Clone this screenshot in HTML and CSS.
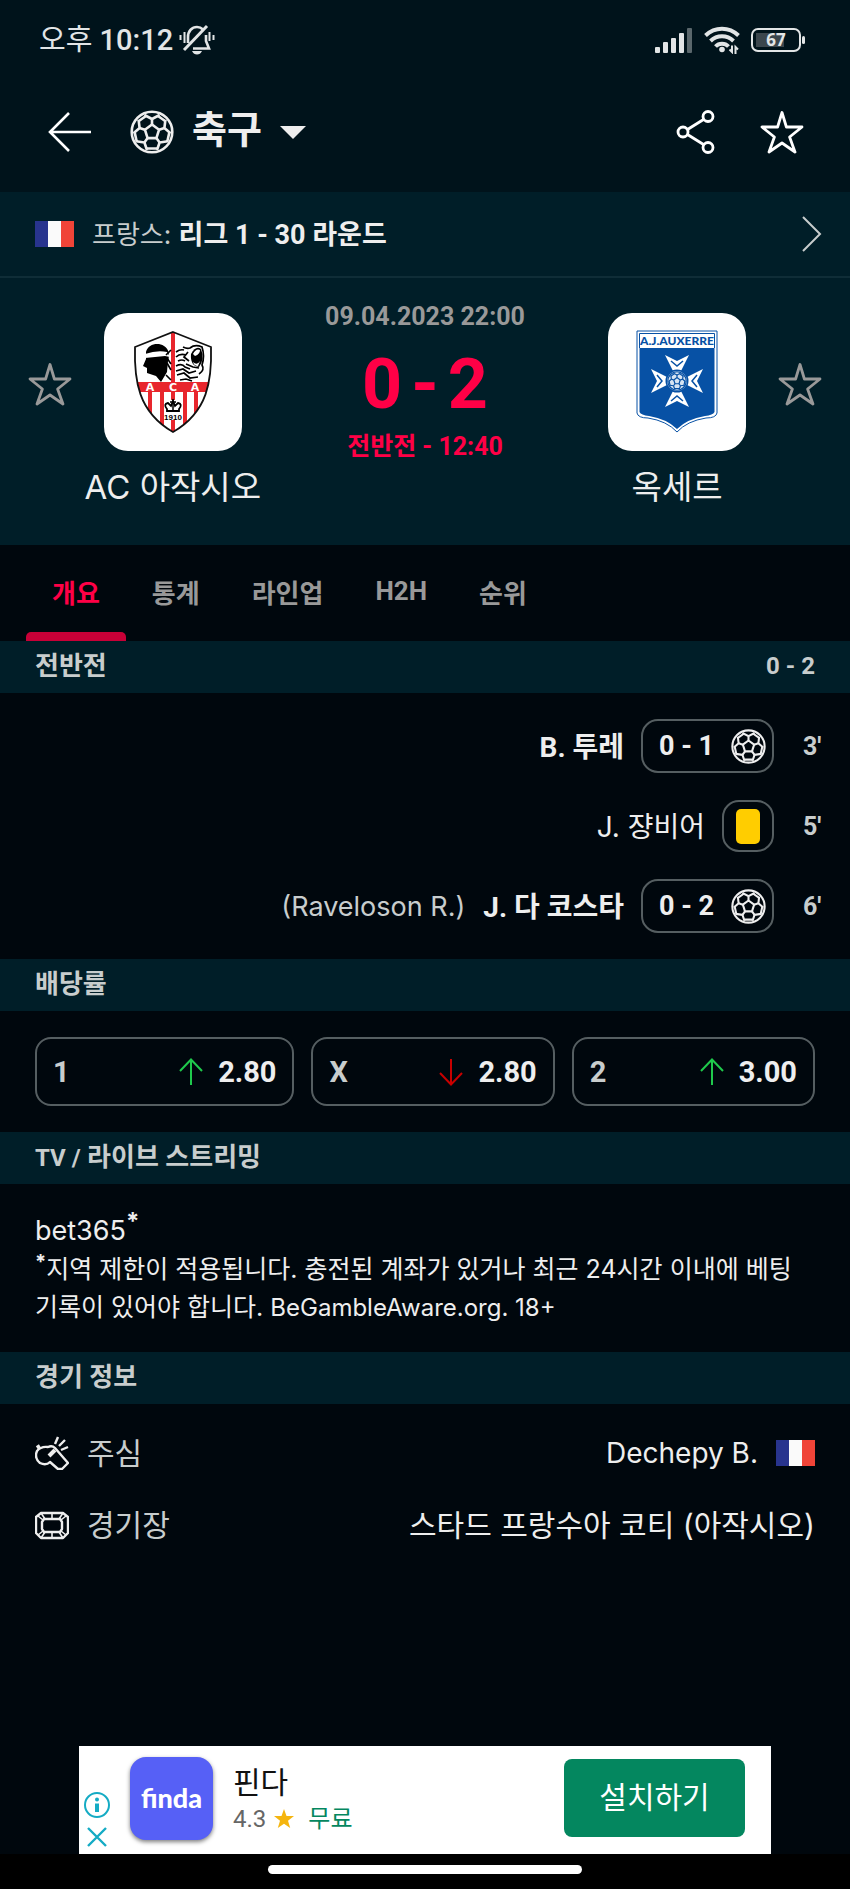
FILE: index.html
```html
<!DOCTYPE html>
<html lang="ko">
<head>
  <meta charset="UTF-8" />
  <meta name="viewport" content="width=device-width, initial-scale=1.0"/>
  <title>AC 아작시오 - 옥세르</title>
  <link rel="stylesheet" href="styles.css">
</head>
<body>
  <!-- shared icons -->
  <svg class="sprite" aria-hidden="true">
    <symbol id="icon-ball" viewBox="0 0 44 44">
      <g fill="none" stroke="currentColor" stroke-width="2.6" stroke-linejoin="round">
        <circle cx="22" cy="22" r="20.3"/>
        <path d="M22 14.5L29.1 19.7L26.4 28.1H17.6L14.9 19.7Z"/>
        <path d="M22 14.5V9M29.1 19.7L34.4 18M26.4 28.1L29.6 32.5M17.6 28.1L14.4 32.5M14.9 19.7L9.6 18"/>
        <path d="M14.4 5L22 9L29.6 5M35.4 9.8L34.4 18L40.5 23.2M37.8 31.3L29.6 32.5L27 40M17 40L14.4 32.5L6.2 31.3M3.5 23.2L9.6 18L8.6 9.8"/>
        <path d="M28 6L35.8 11.5M39.3 22.5L37.2 32M27 38.5H17M6.8 32L4.7 22.5M8.2 11.5L16 6"/>
      </g>
    </symbol>
    <symbol id="icon-star" viewBox="0 0 44 44">
      <path d="M22 2.5L26.4 17H42L29.6 27L35 42L22 33L9 42L14.4 27L2 17H17.6Z" fill="none" stroke="currentColor" stroke-width="2.8" stroke-linejoin="round"/>
    </symbol>
    <symbol id="icon-up" viewBox="0 0 24 28">
      <path d="M12 27V1.5M1 13L12 1.5L23 13" fill="none" stroke="currentColor" stroke-width="2"/>
    </symbol>
    <symbol id="icon-france" viewBox="0 0 39 26">
      <path fill="#28348e" d="M0 0h13v26H0z"/>
      <path fill="#fafafa" d="M13 0h13v26H13z"/>
      <path fill="#f04438" d="M26 0h13v26H26z"/>
    </symbol>
  </svg>

  <header class="header">
    <div class="status-bar">
      <span class="clock"><span class="ampm">오후</span> 10:12</span>
      <svg class="mute" viewBox="0 0 36 32" fill="none" stroke="currentColor" stroke-width="2.6">
        <path d="M9 19V13C9 7 13 3 18 3C20.5 3 22.5 4 24 5.5"/>
        <path d="M27 11V17L30 24.5H14"/>
        <path d="M5 26L28 2" stroke-width="3"/>
        <path d="M13 27H23C22 29.5 20 30.5 18 30.5S14 29.5 13 27Z" fill="currentColor" stroke="none"/>
        <path d="M1.5 11V16M5.5 8V19M30.5 8V17M34.5 11V16" stroke-width="2"/>
      </svg>
      <div class="indicators">
        <svg class="signal" viewBox="0 0 38 25" fill="currentColor">
          <rect x="0" y="19" width="5" height="6" rx="1"/>
          <rect x="8" y="14" width="5" height="11" rx="1"/>
          <rect x="16" y="10" width="5" height="15" rx="1"/>
          <rect x="24" y="5" width="5" height="20" rx="1"/>
          <rect x="32" y="0" width="5" height="25" rx="1" opacity=".4"/>
        </svg>
        <svg class="wifi" viewBox="0 0 36 28" fill="none" stroke="currentColor" stroke-width="4">
          <path d="M1.5 9.5C11 .5 25 .5 34.5 9.5M6.5 15C13 8.8 23 8.8 29.5 15M11.5 20.5C15 16.8 21 16.8 24.5 20.5"/>
          <circle cx="18" cy="23.5" r="2.8" fill="currentColor" stroke="none"/>
          <path d="M28 19.5V26L25.5 23.5M31.5 28V21L34 23.5" stroke-width="2"/>
        </svg>
        <span class="battery"><span class="battery-body">67</span></span>
      </div>
    </div>

    <nav class="toolbar">
      <button type="button" class="icon-btn" aria-label="뒤로">
        <svg class="icon-44" viewBox="0 0 44 44" fill="none" stroke="currentColor" stroke-width="2.6">
          <path d="M43 22H2M21 3L2 22L21 41"/>
        </svg>
      </button>
      <button type="button" class="sport">
        <svg class="icon-44"><use href="#icon-ball"/></svg>
        <span>축구</span>
        <svg class="caret" viewBox="0 0 26 13"><path d="M0 0H26L13 13Z" fill="currentColor"/></svg>
      </button>
      <button type="button" class="icon-btn share" aria-label="공유">
        <svg class="icon-44" viewBox="0 0 44 44" fill="none" stroke="currentColor" stroke-width="2.8">
          <circle cx="9" cy="22" r="5"/><circle cx="34" cy="6.5" r="5"/><circle cx="34" cy="37.5" r="5"/>
          <path d="M13.5 19.5L29.5 9.5M13.5 24.5L29.5 34.5"/>
        </svg>
      </button>
      <button type="button" class="icon-btn" aria-label="즐겨찾기">
        <svg class="icon-44"><use href="#icon-star"/></svg>
      </button>
    </nav>
  </header>

  <main>
    <a class="league" href="#league">
      <svg class="flag"><use href="#icon-france"/></svg>
      <span class="league-name">프랑스: <b>리그 1 - 30 라운드</b></span>
      <svg class="chevron" viewBox="0 0 20 36"><path d="M1 1L18 18L1 35" fill="none" stroke="currentColor" stroke-width="2"/></svg>
    </a>

    <section class="match">
      <button type="button" class="fav" aria-label="AC 아작시오 즐겨찾기"><svg class="icon-44"><use href="#icon-star"/></svg></button>
      <div class="team">
        <div class="crest">
          <svg width="80" height="104" viewBox="0 0 80 104">
            <defs>
              <clipPath id="shield-aca"><path d="M40 2L78 17C79 50 75 82 40 102C5 82 1 50 2 17Z"/></clipPath>
            </defs>
            <g clip-path="url(#shield-aca)">
              <path fill="#fff" d="M0 0H80V104H0z"/>
              <path fill="#e8262d" d="M0 52H80V62H0zM15 62h4v42h-4zM27 62h4v42h-4zM50 62h4v42h-4zM61 62h4v42h-4zM38 0h4v70h-4zM38 90h4v14h-4z"/>
              <path d="M13 22C15 14 25 12 31 16C36 19 37 25 35 31L34 42L28 52L23 46L14 43V38L10 36L13 29Z"/>
              <path d="M12 24Q24 20 34 22L37 27L32 26L12 28Z" fill="#fff"/>
              <path d="M33 25L38 20M34 28L38 34M34 33L38 40M33 45L38 50" fill="none" stroke="#000" stroke-width="1.6"/>
              <path d="M43 22Q47 19 51 20M50 17Q54 19 57 18Q62 14 69 17Q72 26 69 35Q72 40 66 44M43 27Q47 23 53 25M45 31Q49 29 52 31M43 36Q49 33 52 37L57 39M43 41L50 39L56 43L63 41M44 45L51 43L57 48L65 47M47 50L53 49L59 51M55 22L51 27L56 31M53 34L60 37L66 38" fill="none" stroke="#000" stroke-width="1.7"/>
              <path d="M58 24Q63 15 68 19Q72 29 66 37Q57 36 58 24Z"/>
              <path d="M60 24Q63 18 67 20Q67 24 62 26ZM60 32Q64 36 67 31L65 36Q61 36 60 32Z" fill="#fff"/>
              <path d="M34 81H46V79Q50 74 45 73L42 76L40 71L38 76L35 73Q30 74 34 79Z" fill="none" stroke="#000" stroke-width="1.8"/>
              <path d="M40 69V80M37 72H43" stroke="#000" stroke-width="1.5"/>
              <text x="17" y="61" class="aca">A</text><text x="40" y="61" class="aca">C</text><text x="62" y="61" class="aca">A</text>
              <text x="40" y="90" class="aca-year">1910</text>
            </g>
            <path d="M40 2L78 17C79 50 75 82 40 102C5 82 1 50 2 17Z" fill="none" stroke="#111" stroke-width="1.8"/>
          </svg>
        </div>
        <span class="team-name">AC 아작시오</span>
      </div>
      <div class="score">
        <time class="date">09.04.2023 22:00</time>
        <div class="result"><span>0</span><span>-</span><span>2</span></div>
        <div class="stage">전반전 - 12:40</div>
      </div>
      <div class="team">
        <div class="crest">
          <svg width="82" height="104" viewBox="0 0 82 104">
            <path d="M1 1H81V83Q80 88 70 88Q51 91 41 102Q31 91 12 88Q2 88 1 83Z" fill="#fff" stroke="#0751a5"/>
            <path d="M3.5 18H78.5V82Q77 85 69 86Q51 89 41 99Q31 89 13 86Q5 85 3.5 82Z" fill="#0751a5"/>
            <path d="M3.5 18V3.5H78.5V18" fill="none" stroke="#0751a5"/>
            <text x="41" y="15" class="aja">A.J.AUXERRE</text>
            <g fill="#fff">
              <path id="cross-arm" d="M37 41L29 25L41 31L53 25L45 41Z"/>
              <use href="#cross-arm" transform="rotate(90 41 51)"/>
              <use href="#cross-arm" transform="rotate(180 41 51)"/>
              <use href="#cross-arm" transform="rotate(270 41 51)"/>
            </g>
            <path d="M35 31L41 36L47 31M35 71L41 66L47 71M21 45L26 51L21 57M61 45L56 51L61 57" fill="none" stroke="#0751a5" stroke-width="1.5"/>
            <circle cx="41" cy="51" r="11.5" fill="#0751a5"/>
            <circle cx="41" cy="51" r="10" fill="#d7e4f2"/>
            <svg x="31" y="41" width="20" height="20" color="#0751a5"><use href="#icon-ball"/></svg>
          </svg>
        </div>
        <span class="team-name">옥세르</span>
      </div>
      <button type="button" class="fav" aria-label="옥세르 즐겨찾기"><svg class="icon-44"><use href="#icon-star"/></svg></button>
    </section>

    <div class="tabs" role="tablist">
      <button type="button" class="tab active" role="tab" aria-selected="true">개요</button>
      <button type="button" class="tab" role="tab">통계</button>
      <button type="button" class="tab" role="tab">라인업</button>
      <button type="button" class="tab" role="tab">H2H</button>
      <button type="button" class="tab" role="tab">순위</button>
    </div>

    <h2 class="section-title"><span>전반전</span><span class="small">0 - 2</span></h2>
    <ul class="events">
      <li class="event">
        <b class="player">B. 투레</b>
        <span class="badge"><span>0 - 1</span><svg class="ball"><use href="#icon-ball"/></svg></span>
        <span class="minute">3'</span>
      </li>
      <li class="event">
        <span class="player">J. 쟝비어</span>
        <span class="badge card-badge"><span class="yellow-card"></span></span>
        <span class="minute">5'</span>
      </li>
      <li class="event">
        <span class="assist">(Raveloson R.)</span>
        <b class="player">J. 다 코스타</b>
        <span class="badge"><span>0 - 2</span><svg class="ball"><use href="#icon-ball"/></svg></span>
        <span class="minute">6'</span>
      </li>
    </ul>

    <h2 class="section-title">배당률</h2>
    <div class="odds">
      <button type="button" class="odd"><span class="odd-type">1</span><svg class="arrow up"><use href="#icon-up"/></svg><span>2.80</span></button>
      <button type="button" class="odd"><span class="odd-type">X</span><svg class="arrow down"><use href="#icon-up"/></svg><span>2.80</span></button>
      <button type="button" class="odd"><span class="odd-type">2</span><svg class="arrow up"><use href="#icon-up"/></svg><span>3.00</span></button>
    </div>

    <h2 class="section-title"><span><span class="small">TV /</span> 라이브 스트리밍</span></h2>
    <div class="streaming">
      <a class="bookmaker" href="#bet365">bet365<sup>*</sup></a>
      <p><sup>*</sup>지역 제한이 적용됩니다. 충전된 계좌가 있거나 최근 24시간 이내에 베팅 기록이 있어야 합니다. <span class="small">BeGambleAware.org. 18+</span></p>
    </div>

    <h2 class="section-title">경기 정보</h2>
    <dl class="info">
      <div class="info-row">
        <svg class="info-icon" viewBox="0 0 34 34" fill="none" stroke="currentColor" stroke-width="2.4" stroke-linejoin="round">
          <path d="M13 11Q17 9 20 12L33 27L27 33H23L15 26Q11 30 5 27Q-1 22 2 15Q6 10 13 11Z"/>
          <path d="M14 20L20 14" stroke-width="4"/>
          <path d="M2 12L5 10" stroke-width="4"/>
          <path d="M20 8L23 1M24 10L30 4M26 14L33 11"/>
        </svg>
        <dt>주심</dt>
        <dd><span class="referee">Dechepy B.</span><svg class="flag"><use href="#icon-france"/></svg></dd>
      </div>
      <div class="info-row">
        <svg class="info-icon" viewBox="0 0 34 34" fill="none" stroke="currentColor" stroke-width="2.4" stroke-linejoin="round">
          <path d="M6 5H28L33 9V25L28 30H6L1 25V9Z"/>
          <path d="M9 11H25L27 14V21L25 24H9L7 21V14Z"/>
          <path d="M17 5V11M17 24V30M3 8L8 12M31 8L26 12M3 27L8 23M31 27L26 23M6 5L10 11M28 5L24 11M6 30L10 24M28 30L24 24" stroke-width="1.6"/>
        </svg>
        <dt>경기장</dt>
        <dd><span class="venue">스타드 프랑수아 코티 (아작시오)</span></dd>
      </div>
    </dl>
  </main>

  <aside class="ad">
    <div class="ad-controls">
      <button type="button" aria-label="광고 정보">
        <svg width="26" height="26" viewBox="0 0 26 26"><circle cx="13" cy="13" r="12" fill="none" stroke="currentColor" stroke-width="2"/><circle cx="13" cy="7.5" r="2" fill="currentColor"/><path d="M11 11.5H15V20H11Z" fill="currentColor"/></svg>
      </button>
      <button type="button" aria-label="광고 닫기">
        <svg width="20" height="20" viewBox="0 0 20 20"><path d="M1 1L19 19M19 1L1 19" stroke="currentColor" stroke-width="2.4"/></svg>
      </button>
    </div>
    <div class="ad-logo">finda</div>
    <div class="ad-text">
      <div class="ad-title">핀다</div>
      <div class="ad-meta">4.3
        <svg width="20" height="20" viewBox="0 0 20 20"><path d="M10 0L12.5 7H20L14 11.7L16.2 19L10 14.7L3.8 19L6 11.7L0 7H7.5Z" fill="#f5b50f"/></svg>
        <span class="free">무료</span>
      </div>
    </div>
    <button type="button" class="install">설치하기</button>
  </aside>
  <div class="nav-bar"><div class="nav-handle"></div></div>
</body>
</html>
```

FILE: styles.css
```css
* { box-sizing: border-box; }
body {
  margin: 0;
  min-height: 100vh;
  display: flex;
  flex-direction: column;
  background: #00070d;
  color: #eee;
  font-family: Inter, "Noto Sans CJK KR", sans-serif;
}
svg { display: block; flex: none; }
button {
  margin: 0;
  padding: 0;
  border: 0;
  background: none;
  color: inherit;
  font: inherit;
  cursor: pointer;
}
a { color: inherit; text-decoration: none; }
b, .date, .stage, .tab, .section-title, .badge, .minute, .odd {
  font-family: Roboto, "Noto Sans CJK KR", sans-serif;
  font-weight: bold;
}
.sprite { position: absolute; width: 0; height: 0; }
.flag { width: 39px; height: 26px; }
.icon-44 { width: 44px; height: 44px; }
.small { font-size: 24px; }

/* header */
.header { background: #00131b; }
.status-bar {
  display: flex;
  align-items: center;
  padding: 16px 45px 8px 39px;
  line-height: 48px;
  color: #e2e5e6;
}
.clock {
  font-family: Roboto, "Noto Sans CJK KR", sans-serif;
  font-size: 29px;
  font-weight: 500;
}
.ampm { font-weight: normal; }
.mute { width: 36px; height: 32px; margin-left: 6px; }
.indicators { display: flex; align-items: center; gap: 11px; margin-left: auto; }
.signal { width: 38px; height: 25px; }
.wifi { width: 36px; height: 28px; }
.battery { display: flex; align-items: center; gap: 1px; }
.battery::after { content: ""; width: 3px; height: 8px; border-radius: 2px; background: #e2e5e6; }
.battery-body {
  width: 50px;
  height: 24px;
  border: 2px solid #e2e5e6;
  border-radius: 7px;
  background: linear-gradient(#3b464d, #3b464d) 3px 3px / 28px 14px no-repeat;
  font-family: "Noto Sans", sans-serif;
  font-size: 17px;
  font-weight: bold;
  line-height: 20px;
  text-align: center;
}
.toolbar { display: flex; align-items: center; padding: 38px 46px 38px 48px; color: #fff; }
.sport {
  display: flex;
  align-items: center;
  margin-left: 38px;
  color: #eee;
  font-size: 38px;
  font-weight: bold;
  line-height: 38px;
}
.sport span { margin: 0 18px 6px; }
.caret { width: 26px; height: 13px; }
.share { margin-left: auto; margin-right: 42px; }

/* league */
.league {
  display: flex;
  align-items: center;
  min-height: 86px;
  padding: 0 28px 0 35px;
  border-bottom: 2px solid #0f2d37;
  background: #001e28;
  font-size: 26px;
}
.league-name { flex: 1; margin-left: 18px; padding-bottom: 4px; color: #c8cdcd; }
.league-name b { color: #eee; font-size: 27px; }
.chevron { width: 20px; height: 36px; color: #c8cdcd; }

/* match */
.match {
  display: grid;
  grid-template-columns: 44px 2fr 3fr 2fr 44px;
  align-items: start;
  padding: 24px 28px 35px;
  background: #001e28;
}
.fav { margin-top: 60px; color: #999; }
.team { display: flex; flex-direction: column; align-items: center; padding-top: 11px; }
.crest {
  display: flex;
  align-items: center;
  justify-content: center;
  width: 138px;
  height: 138px;
  border-radius: 24px;
  background: #fff;
}
.team-name { margin-top: 14px; padding-bottom: 1px; font-size: 33px; line-height: 44px; white-space: nowrap; }
.aca { font: bold 11px "DejaVu Sans", sans-serif; fill: #fff; text-anchor: middle; }
.aca-year { font: bold 8px "Liberation Sans", sans-serif; text-anchor: middle; }
.aja { font: 900 12px Lato, sans-serif; fill: #0751a5; text-anchor: middle; }
.score { text-align: center; color: #ff0046; font-size: 25px; line-height: 30px; }
.date { display: block; color: #999; }
.result {
  display: flex;
  justify-content: center;
  gap: 9px;
  margin: 22px 0 18px;
  font-family: Roboto, sans-serif;
  font-size: 70px;
  font-weight: bold;
  line-height: 60px;
}

/* tabs */
.tabs { display: flex; padding-left: 26px; }
.tab {
  position: relative;
  height: 96px;
  padding: 0 26px 4px;
  color: #999;
  font-size: 26px;
}
.tab.active { color: #ff0046; }
.tab.active::after {
  content: "";
  position: absolute;
  right: 0;
  bottom: 0;
  left: 0;
  height: 9px;
  border-radius: 5px 5px 0 0;
  background: #c80037;
}
.section-title {
  display: flex;
  justify-content: space-between;
  height: 52px;
  margin: 0;
  padding: 0 35px;
  background: #001e28;
  color: #c8cdcd;
  font-size: 26px;
  line-height: 50px;
}

/* events */
.events {
  display: flex;
  flex-direction: column;
  gap: 26px;
  margin: 0;
  padding: 26px 27px;
  list-style: none;
}
.event { display: flex; align-items: center; justify-content: flex-end; height: 54px; font-size: 28px; }
.player { padding-bottom: 2px; }
.assist { margin-right: 18px; color: #c8cdcd; font-size: 27px; }
.badge {
  display: flex;
  align-items: center;
  justify-content: space-between;
  width: 133px;
  height: 54px;
  margin: 0 29px 0 17px;
  padding: 0 6px 0 16px;
  border: 2px solid #555e61;
  border-radius: 17px;
  font-size: 27px;
}
.card-badge { width: 52px; height: 52px; padding: 0; justify-content: center; }
.yellow-card { width: 24px; height: 35px; border-radius: 5px; background: #ffcd00; }
.ball { width: 35px; height: 35px; }
.minute { width: 20px; color: #c8cdcd; font-size: 25px; white-space: nowrap; }

/* odds */
.odds { display: grid; grid-template-columns: 16fr 15fr 15fr; gap: 17px; padding: 26px 35px; }
.odd {
  display: flex;
  align-items: center;
  height: 69px;
  padding: 0 16px;
  border: 2px solid #555e61;
  border-radius: 16px;
  font-size: 29px;
}
.odd-type { flex: 1; color: #c8cdcd; text-align: left; }
.arrow { width: 24px; height: 28px; margin-right: 15px; }
.up { color: #1fc94c; }
.down { color: #c80000; transform: rotate(180deg); }

/* streaming */
.streaming { padding: 28px 35px 25px; font-size: 25px; line-height: 38px; }
.streaming p { margin: 0; word-break: keep-all; }
.streaming sup { font-size: 20px; font-weight: bold; line-height: 0; }
.bookmaker { display: block; font-size: 27px; }
.bookmaker sup { font-size: 24px; }

/* match info */
.info { margin: 0; padding: 13px 35px; font-size: 30px; }
.info-row { display: flex; align-items: center; height: 72px; }
.info-icon { width: 34px; height: 34px; }
.info dt { margin-left: 18px; padding-bottom: 4px; color: #c8cdcd; }
.info dd { display: flex; align-items: center; gap: 18px; margin: 0 0 0 auto; }
.referee { font-size: 28px; }
.venue { padding-bottom: 4px; }

/* ad banner */
.ad {
  display: flex;
  align-items: center;
  height: 108px;
  margin: auto 79px 0;
  padding: 0 26px 0 5px;
  background: #fff;
}
.ad-controls {
  display: flex;
  flex-direction: column;
  align-items: center;
  align-self: flex-end;
  gap: 9px;
  padding-bottom: 7px;
  color: #14abc4;
}
.ad-logo {
  width: 83px;
  height: 83px;
  margin: 0 20px 3px;
  border-radius: 16px;
  background: #5660f6;
  box-shadow: 0 2px 4px rgba(0, 0, 0, .5);
  color: #fff;
  font-family: Lato, sans-serif;
  font-size: 27px;
  font-weight: 900;
  line-height: 82px;
  text-align: center;
}
.ad-title { color: #111; font-size: 30px; line-height: 38px; }
.ad-meta {
  display: flex;
  align-items: center;
  gap: 8px;
  color: #666;
  font-family: Roboto, "Noto Sans CJK KR", sans-serif;
  font-size: 24px;
  line-height: 36px;
}
.free { margin-left: 6px; color: #04875f; }
.install {
  width: 181px;
  height: 78px;
  margin: 0 0 4px auto;
  padding-bottom: 6px;
  border-radius: 8px;
  background: #04875f;
  color: #fff;
  font-size: 30px;
}
.nav-bar { display: flex; justify-content: center; padding: 11px 0 15px; background: #000; }
.nav-handle { width: 37%; height: 9px; border-radius: 5px; background: #fff; }
```
